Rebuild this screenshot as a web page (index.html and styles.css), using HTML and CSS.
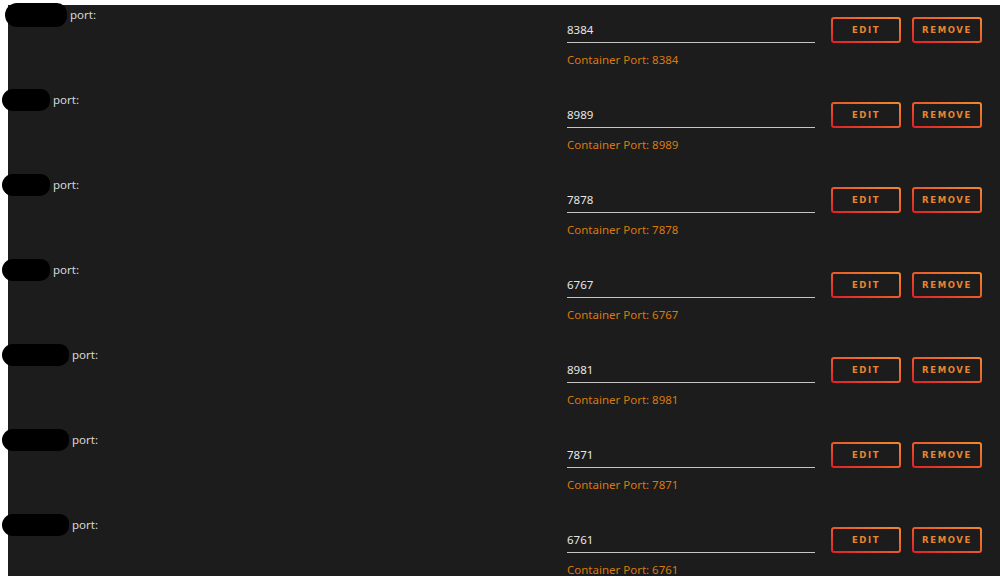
FILE: index.html
```html
<!DOCTYPE html>
<html lang="en">
<head>
    <meta charset="UTF-8">
    <meta name="viewport" content="width=device-width, initial-scale=1.0">
    <title>Ports</title>
    <link rel="stylesheet" href="styles.css">
</head>
<body>
    <div class="panel">
        <div class="port-row">
            <div class="name"><span class="blob blob-first"></span>port:</div>
            <div class="field">
                <div class="value">8384</div>
                <div class="hint">Container Port: 8384</div>
            </div>
            <div class="actions">
                <button class="btn">EDIT</button>
                <button class="btn">REMOVE</button>
            </div>
        </div>

        <div class="port-row">
            <div class="name"><span class="blob blob-short"></span>port:</div>
            <div class="field">
                <div class="value">8989</div>
                <div class="hint">Container Port: 8989</div>
            </div>
            <div class="actions">
                <button class="btn">EDIT</button>
                <button class="btn">REMOVE</button>
            </div>
        </div>

        <div class="port-row">
            <div class="name"><span class="blob blob-short"></span>port:</div>
            <div class="field">
                <div class="value">7878</div>
                <div class="hint">Container Port: 7878</div>
            </div>
            <div class="actions">
                <button class="btn">EDIT</button>
                <button class="btn">REMOVE</button>
            </div>
        </div>

        <div class="port-row">
            <div class="name"><span class="blob blob-short"></span>port:</div>
            <div class="field">
                <div class="value">6767</div>
                <div class="hint">Container Port: 6767</div>
            </div>
            <div class="actions">
                <button class="btn">EDIT</button>
                <button class="btn">REMOVE</button>
            </div>
        </div>

        <div class="port-row">
            <div class="name"><span class="blob blob-wide"></span>port:</div>
            <div class="field">
                <div class="value">8981</div>
                <div class="hint">Container Port: 8981</div>
            </div>
            <div class="actions">
                <button class="btn">EDIT</button>
                <button class="btn">REMOVE</button>
            </div>
        </div>

        <div class="port-row">
            <div class="name"><span class="blob blob-wide"></span>port:</div>
            <div class="field">
                <div class="value">7871</div>
                <div class="hint">Container Port: 7871</div>
            </div>
            <div class="actions">
                <button class="btn">EDIT</button>
                <button class="btn">REMOVE</button>
            </div>
        </div>

        <div class="port-row">
            <div class="name"><span class="blob blob-wide"></span>port:</div>
            <div class="field">
                <div class="value">6761</div>
                <div class="hint">Container Port: 6761</div>
            </div>
            <div class="actions">
                <button class="btn">EDIT</button>
                <button class="btn">REMOVE</button>
            </div>
        </div>
    </div>
</body>
</html>
```

FILE: styles.css
```css
* {
    box-sizing: border-box;
    margin: 0;
    padding: 0;
}

body {
    background-color: #ffffff;
    font-family: 'Noto Sans', 'Open Sans', sans-serif;
    overflow: hidden;
}

.panel {
    margin: 5px 0 0 8px;
    background-color: #1c1c1c;
    min-height: 600px;
}

.port-row {
    display: flex;
    align-items: flex-start;
    height: 85px;
    padding-right: 18px;
}

.name {
    flex: 1;
    display: flex;
    align-items: flex-start;
    padding-top: 2px;
    font-size: 11.5px;
    line-height: 16px;
    color: #d8d8d8;
}

.blob {
    display: inline-block;
    height: 22px;
    margin-top: -3px;
    margin-bottom: -6px;
    margin-right: 3px;
    background-color: #000;
    border-radius: 12px 10px 11px 12px;
}

.blob-first {
    width: 62px;
    height: 24px;
    margin-left: -3px;
    margin-top: -4px;
}

.blob-short {
    width: 48px;
    margin-left: -6px;
}

.blob-wide {
    width: 67px;
    margin-left: -6px;
}

.field {
    width: 248px;
    padding-top: 17px;
}

.value {
    font-size: 11.5px;
    line-height: 16px;
    color: #e6e6e6;
    padding-bottom: 4px;
    border-bottom: 1px solid #c4c4c4;
}

.hint {
    margin-top: 9px;
    font-size: 11.5px;
    line-height: 16px;
    color: #d97a0e;
}

.actions {
    display: flex;
    gap: 11px;
    margin-left: 16px;
    margin-top: 12px;
}

.btn {
    width: 70px;
    height: 26px;
    border: 2px solid transparent;
    border-radius: 3px;
    background:
        linear-gradient(#1c1c1c, #1c1c1c) padding-box,
        linear-gradient(to top right, #e11f2a, #e9552a 45%, #f08a30) border-box;
    color: #e88530;
    font-family: 'DejaVu Sans', sans-serif;
    font-size: 8.5px;
    font-weight: bold;
    letter-spacing: 1.6px;
    cursor: pointer;
}
```
